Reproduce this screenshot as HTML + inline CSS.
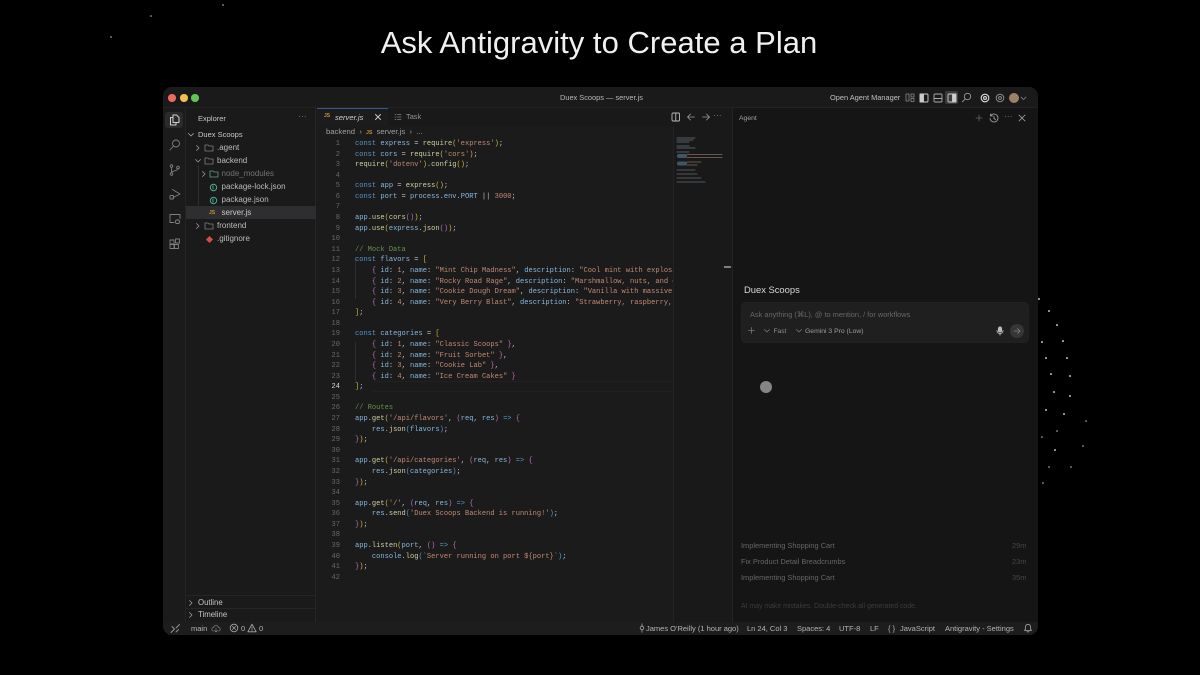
<!DOCTYPE html>
<html><head><meta charset="utf-8"><style>
*{box-sizing:border-box}
html,body{margin:0;padding:0;width:1200px;height:675px;overflow:hidden;background:#000}
body{position:relative;font-family:"Liberation Sans",sans-serif}
.a{position:absolute;white-space:pre}
h1{position:absolute;left:-1px;top:24px;width:1200px;margin:0;text-align:center;font-weight:400;font-size:31px;line-height:38px;letter-spacing:.02px;color:#f0f0f0}
#w{position:absolute;left:163px;top:87px;width:875px;height:548px;background:#1b1b1c;border-radius:9px;overflow:hidden;filter:blur(.35px)}
#code{position:absolute;left:192px;top:52px;width:318px;height:450px;overflow:hidden;font:7.05px/10.58px "Liberation Mono",monospace;color:#bfc2c6}
#code div{height:10.58px;white-space:pre}
#nums{position:absolute;left:155px;top:52px;width:22px;text-align:right;font:7.05px/10.58px "Liberation Mono",monospace;color:#65686b}
#nums div{height:10.58px}
.k{color:#5595c4}.v{color:#86b8dc}.f{color:#cfcfa2}.s{color:#c08a73}.c{color:#64904f}.y{color:#cfb238}.p{color:#b96fb4}.b{color:#5595c4}
.t{font-size:8px;color:#bcbcbc}
.h{font-size:7.5px;color:#c4c4c4}
.st{font-size:7.5px;color:#b5b5b5;top:536px;line-height:12px}
svg{position:absolute;overflow:visible;fill:none;stroke-linecap:round;stroke-linejoin:round}
.s1{position:absolute;width:1.5px;height:1.5px;border-radius:50%;background:#a8a8a8}
.s2{position:absolute;width:1.5px;height:1.5px;border-radius:50%;background:#666}
</style></head><body>
<h1>Ask Antigravity to Create a Plan</h1>

<i class="s2" style="left:150px;top:15px;background:#567"></i><i class="s2" style="left:222px;top:4px"></i><i class="s2" style="left:110px;top:36px"></i>
<i class="s1" style="left:1038px;top:298px"></i><i class="s1" style="left:1048px;top:310px"></i><i class="s1" style="left:1056px;top:324px"></i><i class="s1" style="left:1041px;top:341px"></i><i class="s1" style="left:1062px;top:340px"></i><i class="s1" style="left:1045px;top:357px"></i><i class="s1" style="left:1066px;top:357px"></i><i class="s1" style="left:1050px;top:373px"></i><i class="s1" style="left:1069px;top:375px"></i><i class="s1" style="left:1053px;top:391px"></i><i class="s1" style="left:1069px;top:395px"></i><i class="s1" style="left:1045px;top:409px"></i><i class="s1" style="left:1063px;top:413px"></i><i class="s2" style="left:1085px;top:420px"></i><i class="s2" style="left:1056px;top:430px"></i><i class="s2" style="left:1041px;top:436px"></i><i class="s2" style="left:1082px;top:445px"></i><i class="s1" style="left:1054px;top:449px"></i><i class="s2" style="left:1048px;top:466px"></i><i class="s2" style="left:1070px;top:466px"></i><i class="s2" style="left:1042px;top:482px"></i>

<div id="w">
<!-- panels -->
<div class="a" style="left:0;top:0;width:875px;height:21px;background:#1a1a1b;border-bottom:1px solid #222223"></div>
<div class="a" style="left:0;top:21px;width:23px;height:514px;background:#1b1b1c;border-right:1px solid #242425"></div>
<div class="a" style="left:23px;top:21px;width:130px;height:514px;background:#1a1a1b;border-right:1px solid #262627"></div>
<div class="a" style="left:154px;top:21px;width:415px;height:18px;background:#19191a"></div>
<div class="a" style="left:510px;top:39px;width:59px;height:496px;background:#191919;border-left:1px solid #232324"></div>
<div class="a" style="left:569px;top:21px;width:306px;height:514px;background:#151515;border-left:1px solid #242425"></div>
<div class="a" style="left:0;top:535px;width:875px;height:13px;background:#1d1d1e"></div>

<!-- traffic lights -->
<i class="a" style="left:5px;top:7px;width:7.5px;height:7.5px;border-radius:50%;background:#ee6a5f"></i>
<i class="a" style="left:17px;top:7px;width:7.5px;height:7.5px;border-radius:50%;background:#f5bd4f"></i>
<i class="a" style="left:28px;top:7px;width:7.5px;height:7.5px;border-radius:50%;background:#61c454"></i>
<div class="a" style="left:1px;top:5px;width:875px;text-align:center;font-size:7.4px;line-height:11px;color:#b8b8b8">Duex Scoops — server.js</div>
<div class="a" style="left:667px;top:5px;font-size:7.4px;line-height:11px;color:#c0c0c0">Open Agent Manager</div>

<!-- title icons -->
<svg style="left:742px;top:6px" width="10" height="10" stroke="#8a8a8a" stroke-width=".8"><rect x="1" y="1" width="3" height="7"/><rect x="6" y="1" width="3" height="3"/><rect x="6" y="5.5" width="3" height="3"/></svg>
<svg style="left:756px;top:6px" width="10" height="10" stroke="#ccc" stroke-width=".9"><rect x="1" y="1" width="8" height="8" rx="1"/><rect x="1" y="1" width="3.5" height="8" fill="#ccc"/></svg>
<svg style="left:770px;top:6px" width="10" height="10" stroke="#aaa" stroke-width=".9"><rect x="1" y="1" width="8" height="8" rx="1"/><path d="M1 5.5h8"/></svg>
<div class="a" style="left:782px;top:4px;width:13px;height:13px;background:#3b3b3c;border-radius:2px"></div>
<svg style="left:784px;top:6px" width="10" height="10" stroke="#ccc" stroke-width=".9"><rect x="1" y="1" width="8" height="8" rx="1"/><rect x="5.5" y="1" width="3.5" height="8" fill="#ccc"/></svg>
<svg style="left:798px;top:5px" width="11" height="11" stroke="#999" stroke-width=".9"><circle cx="6.5" cy="4.5" r="3.2"/><path d="M4 7L1.5 9.8"/></svg>
<svg style="left:817px;top:6px" width="10" height="10" stroke="#ddd" stroke-width="1.1"><circle cx="5" cy="5" r="3.8"/><circle cx="5" cy="5" r="1.4"/></svg>
<svg style="left:832px;top:6px" width="10" height="10" stroke="#999" stroke-width=".9"><circle cx="5" cy="5" r="3.8"/><circle cx="5" cy="5" r="1.4"/></svg>
<i class="a" style="left:846px;top:6px;width:10px;height:10px;border-radius:50%;background:#9a8268"></i>
<svg style="left:857px;top:9px" width="7" height="5" stroke="#888" stroke-width=".8"><path d="M1 1l2.5 2.5L6 1"/></svg>

<!-- activity bar -->
<div class="a" style="left:2px;top:25px;width:18px;height:16px;background:#2b2b2c;border-radius:3px"></div>
<svg style="left:6px;top:27px" width="11" height="12" stroke="#d0d0d0" stroke-width="1"><path d="M4 1h3.5L10 3.5V8.500H4z"/><path d="M4 3.500H1.500V11H7V8.500"/></svg>
<svg style="left:6px;top:52px" width="12" height="12" stroke="#808080" stroke-width=".9"><circle cx="7" cy="4.500" r="3.500"/><path d="M4.500 7L1 11"/></svg>
<svg style="left:6px;top:77px" width="12" height="12" stroke="#808080" stroke-width=".9"><circle cx="2.500" cy="2" r="1.300"/><circle cx="2.500" cy="10" r="1.300"/><circle cx="9" cy="3.500" r="1.300"/><path d="M2.500 3.300v5.400M9 4.800c0 2.500-6.500 1.500-6.500 4"/></svg>
<svg style="left:6px;top:101px" width="12" height="12" stroke="#808080" stroke-width=".9"><path d="M3.500 1.500L11 6 4 9.500"/><rect x="1" y="7.500" width="3.500" height="3.500" rx=".8"/></svg>
<svg style="left:6px;top:126px" width="12" height="12" stroke="#808080" stroke-width=".9"><path d="M5 9.500H1V1.500h10v4"/><rect x="6.500" y="7" width="4" height="3.500" rx="1.500"/></svg>
<svg style="left:6px;top:151px" width="12" height="12" stroke="#808080" stroke-width=".9"><rect x="1" y="2" width="4" height="4"/><rect x="1" y="6.500" width="4" height="4"/><rect x="5.500" y="6.500" width="4" height="4"/><rect x="6.500" y="1" width="4" height="4"/></svg>
<svg style="left:7px;top:536px" width="11" height="11" stroke="#999" stroke-width=".9"><path d="M1 9.500L4.500 6 2 3.500M6 9l2.500-2.500M6 5L9.500 1.500"/></svg>

<!-- explorer -->
<div class="a h" style="left:35px;top:26px;line-height:11px">Explorer</div>
<div class="a" style="left:135px;top:24px;font-size:8px;line-height:11px;color:#888;letter-spacing:.3px">···</div>
<svg style="left:24px;top:44px" width="8" height="8" stroke="#aaa" stroke-width=".8"><path d="M1.500 2.500L4 5l2.500-2.500"/></svg>
<div class="a h" style="left:35px;top:43px;line-height:10px;color:#c8c8c8">Duex Scoops</div>

<svg style="left:31px;top:57px" width="8" height="8" stroke="#999" stroke-width=".8"><path d="M2.500 1.500L5 4 2.500 6.500"/></svg>
<svg style="left:41px;top:57px" width="10" height="8" stroke="#808080" stroke-width=".8"><path d="M1 1h3l1 1h4v5H1z"/></svg>
<div class="a t" style="left:54px;top:56px;line-height:10px">.agent</div>

<svg style="left:31px;top:70px" width="8" height="8" stroke="#999" stroke-width=".8"><path d="M1.500 2.500L4 5l2.500-2.500"/></svg>
<svg style="left:41px;top:70px" width="10" height="8" stroke="#808080" stroke-width=".8"><path d="M1 1h3l1 1h4v5H1z"/></svg>
<div class="a t" style="left:54px;top:69px;line-height:10px">backend</div>

<i class="a" style="left:35px;top:78px;width:1px;height:51px;background:#2e2e2f"></i>
<svg style="left:37px;top:83px" width="8" height="8" stroke="#999" stroke-width=".8"><path d="M2.500 1.500L5 4 2.500 6.500"/></svg>
<svg style="left:46px;top:83px" width="10" height="8" stroke="#5f9e88" stroke-width=".8"><path d="M1 1h3l1 1h4v5H1z"/></svg>
<div class="a t" style="left:58.500px;top:82px;line-height:10px;color:#737373">node_modules</div>

<svg style="left:46px;top:96px" width="9" height="9" stroke="#4fa88f" stroke-width="1"><circle cx="4.500" cy="4.500" r="3.200"/><path d="M4 3v3"/></svg>
<div class="a t" style="left:58.500px;top:95px;line-height:10px">package-lock.json</div>
<svg style="left:46px;top:109px" width="9" height="9" stroke="#4fa88f" stroke-width="1"><circle cx="4.500" cy="4.500" r="3.200"/><path d="M4 3v3"/></svg>
<div class="a t" style="left:58.500px;top:108px;line-height:10px">package.json</div>

<div class="a" style="left:23px;top:119px;width:130px;height:13px;background:#2e2e30"></div>
<div class="a" style="left:46px;top:122px;font-size:5px;line-height:9px;font-weight:700;color:#c9923f">JS</div>
<div class="a t" style="left:58.500px;top:121px;line-height:10px;color:#c8c8c8">server.js</div>

<svg style="left:31px;top:135px" width="8" height="8" stroke="#999" stroke-width=".8"><path d="M2.500 1.500L5 4 2.500 6.500"/></svg>
<svg style="left:41px;top:135px" width="10" height="8" stroke="#808080" stroke-width=".8"><path d="M1 1h3l1 1h4v5H1z"/></svg>
<div class="a t" style="left:54px;top:134px;line-height:10px">frontend</div>
<i class="a" style="left:43.500px;top:150px;width:5px;height:5px;background:#d84c46;transform:rotate(45deg)"></i>
<div class="a t" style="left:54px;top:147px;line-height:10px">.gitignore</div>

<div class="a" style="left:23px;top:508px;width:130px;height:1px;background:#252526"></div>
<div class="a" style="left:23px;top:521px;width:130px;height:1px;background:#252526"></div>
<svg style="left:24px;top:512px" width="8" height="8" stroke="#999" stroke-width=".8"><path d="M2.500 1.500L5 4 2.500 6.500"/></svg>
<div class="a h" style="left:35px;top:511px;line-height:10px;font-size:7.8px">Outline</div>
<svg style="left:24px;top:524px" width="8" height="8" stroke="#999" stroke-width=".8"><path d="M2.500 1.500L5 4 2.500 6.500"/></svg>
<div class="a h" style="left:35px;top:523px;line-height:10px;font-size:7.8px">Timeline</div>

<!-- tabs -->
<div class="a" style="left:154px;top:21px;width:71px;height:18px;background:#1c1c1d;border-top:1px solid #2f5a88"></div>
<div class="a" style="left:161px;top:25px;font-size:5px;line-height:9px;font-weight:700;color:#c9923f">JS</div>
<div class="a" style="left:172px;top:24.500px;font-size:7.600px;line-height:11px;font-style:italic;color:#d0d0d0">server.js</div>
<svg style="left:210px;top:25px" width="10" height="10" stroke="#ccc" stroke-width=".9"><path d="M2.500 2.500l5 5M7.500 2.500l-5 5"/></svg>
<svg style="left:231px;top:26px" width="8" height="8" stroke="#808080" stroke-width=".8"><path d="M1 1.500h1M3.500 1.500H7M1 4h1M3.500 4H7M1 6.500h1M3.500 6.500H7"/></svg>
<div class="a" style="left:243px;top:25px;font-size:7.400px;line-height:10px;color:#909090">Task</div>

<svg style="left:508px;top:25px" width="10" height="10" stroke="#bbb" stroke-width=".9"><rect x="1" y="1" width="7.500" height="8" rx="1"/><path d="M4.750 1v8"/></svg>
<svg style="left:523px;top:25px" width="10" height="10" stroke="#999" stroke-width=".8"><path d="M8.500 5h-7M4.500 2L1.500 5l3 3"/></svg>
<svg style="left:538px;top:25px" width="10" height="10" stroke="#999" stroke-width=".8"><path d="M1.500 5h7M5.500 2l3 3-3 3"/></svg>
<div class="a" style="left:550px;top:23px;font-size:8px;line-height:11px;color:#888;letter-spacing:.3px">···</div>

<!-- breadcrumbs -->
<div class="a" style="left:163px;top:40px;font-size:7.700px;line-height:10px;color:#a0a0a0">backend  ›  <span style="font-size:5px;font-weight:700;color:#c9923f">JS</span>  server.js  ›  ...</div>

<!-- line numbers -->
<div id="nums"><div>1</div><div>2</div><div>3</div><div>4</div><div>5</div><div>6</div><div>7</div><div>8</div><div>9</div><div>10</div><div>11</div><div>12</div><div>13</div><div>14</div><div>15</div><div>16</div><div>17</div><div>18</div><div>19</div><div>20</div><div>21</div><div>22</div><div>23</div><div style="color:#d8d8d8">24</div><div>25</div><div>26</div><div>27</div><div>28</div><div>29</div><div>30</div><div>31</div><div>32</div><div>33</div><div>34</div><div>35</div><div>36</div><div>37</div><div>38</div><div>39</div><div>40</div><div>41</div><div>42</div></div>

<i class="a" style="left:192px;top:171px;width:1px;height:41px;background:#2e2e2f"></i>
<i class="a" style="left:192px;top:255px;width:1px;height:41px;background:#2e2e2f"></i>
<i class="a" style="left:210px;top:294px;width:300px;height:1px;background:#212122"></i>
<i class="a" style="left:210px;top:304px;width:300px;height:1px;background:#212122"></i>

<div id="code">
<div><span class="k">const</span> <span class="v">express</span> = <span class="f">require</span><span class="y">(</span><span class="s">'express'</span><span class="y">)</span>;</div>
<div><span class="k">const</span> <span class="v">cors</span> = <span class="f">require</span><span class="y">(</span><span class="s">'cors'</span><span class="y">)</span>;</div>
<div><span class="f">require</span><span class="y">(</span><span class="s">'dotenv'</span><span class="y">)</span>.<span class="f">config</span><span class="y">()</span>;</div>
<div> </div>
<div><span class="k">const</span> <span class="v">app</span> = <span class="f">express</span><span class="y">()</span>;</div>
<div><span class="k">const</span> <span class="v">port</span> = <span class="v">process</span>.<span class="v">env</span>.<span class="v">PORT</span> || <span class="s">3000</span>;</div>
<div> </div>
<div><span class="v">app</span>.<span class="f">use</span><span class="y">(</span><span class="f">cors</span><span class="p">()</span><span class="y">)</span>;</div>
<div><span class="v">app</span>.<span class="f">use</span><span class="y">(</span><span class="v">express</span>.<span class="f">json</span><span class="p">()</span><span class="y">)</span>;</div>
<div> </div>
<div><span class="c">// Mock Data</span></div>
<div><span class="k">const</span> <span class="v">flavors</span> = <span class="y">[</span></div>
<div>    <span class="p">{</span> <span class="v">id</span>: <span class="s">1</span>, <span class="v">name</span>: <span class="s">"Mint Chip Madness"</span>, <span class="v">description</span>: <span class="s">"Cool mint with explosive chocolate"</span></div>
<div>    <span class="p">{</span> <span class="v">id</span>: <span class="s">2</span>, <span class="v">name</span>: <span class="s">"Rocky Road Rage"</span>, <span class="v">description</span>: <span class="s">"Marshmallow, nuts, and chocolate"</span></div>
<div>    <span class="p">{</span> <span class="v">id</span>: <span class="s">3</span>, <span class="v">name</span>: <span class="s">"Cookie Dough Dream"</span>, <span class="v">description</span>: <span class="s">"Vanilla with massive chunks"</span></div>
<div>    <span class="p">{</span> <span class="v">id</span>: <span class="s">4</span>, <span class="v">name</span>: <span class="s">"Very Berry Blast"</span>, <span class="v">description</span>: <span class="s">"Strawberry, raspberry, blueberry"</span></div>
<div><span class="y">]</span>;</div>
<div> </div>
<div><span class="k">const</span> <span class="v">categories</span> = <span class="y">[</span></div>
<div>    <span class="p">{</span> <span class="v">id</span>: <span class="s">1</span>, <span class="v">name</span>: <span class="s">"Classic Scoops"</span> <span class="p">}</span>,</div>
<div>    <span class="p">{</span> <span class="v">id</span>: <span class="s">2</span>, <span class="v">name</span>: <span class="s">"Fruit Sorbet"</span> <span class="p">}</span>,</div>
<div>    <span class="p">{</span> <span class="v">id</span>: <span class="s">3</span>, <span class="v">name</span>: <span class="s">"Cookie Lab"</span> <span class="p">}</span>,</div>
<div>    <span class="p">{</span> <span class="v">id</span>: <span class="s">4</span>, <span class="v">name</span>: <span class="s">"Ice Cream Cakes"</span> <span class="p">}</span></div>
<div><span class="y">]</span>;</div>
<div> </div>
<div><span class="c">// Routes</span></div>
<div><span class="v">app</span>.<span class="f">get</span><span class="y">(</span><span class="s">'/api/flavors'</span>, <span class="p">(</span><span class="v">req</span>, <span class="v">res</span><span class="p">)</span> <span class="k">=&gt;</span> <span class="p">{</span></div>
<div>    <span class="v">res</span>.<span class="f">json</span><span class="b">(</span><span class="v">flavors</span><span class="b">)</span>;</div>
<div><span class="p">}</span><span class="y">)</span>;</div>
<div> </div>
<div><span class="v">app</span>.<span class="f">get</span><span class="y">(</span><span class="s">'/api/categories'</span>, <span class="p">(</span><span class="v">req</span>, <span class="v">res</span><span class="p">)</span> <span class="k">=&gt;</span> <span class="p">{</span></div>
<div>    <span class="v">res</span>.<span class="f">json</span><span class="b">(</span><span class="v">categories</span><span class="b">)</span>;</div>
<div><span class="p">}</span><span class="y">)</span>;</div>
<div> </div>
<div><span class="v">app</span>.<span class="f">get</span><span class="y">(</span><span class="s">'/'</span>, <span class="p">(</span><span class="v">req</span>, <span class="v">res</span><span class="p">)</span> <span class="k">=&gt;</span> <span class="p">{</span></div>
<div>    <span class="v">res</span>.<span class="f">send</span><span class="b">(</span><span class="s">'Duex Scoops Backend is running!'</span><span class="b">)</span>;</div>
<div><span class="p">}</span><span class="y">)</span>;</div>
<div> </div>
<div><span class="v">app</span>.<span class="f">listen</span><span class="y">(</span><span class="v">port</span>, <span class="p">()</span> <span class="k">=&gt;</span> <span class="p">{</span></div>
<div>    <span class="v">console</span>.<span class="f">log</span><span class="b">(</span><span class="s">`Server running on port ${port}`</span><span class="b">)</span>;</div>
<div><span class="p">}</span><span class="y">)</span>;</div>
<div> </div>
</div>

<!-- minimap -->
<svg style="left:513px;top:50px" width="50" height="56" stroke-width="1">
<path stroke="#7a8a98" d="M1 1h18M1 3h16M1 5h12M1 9h12M1 11h18M1 15h12" opacity=".6"/>
<path stroke="#5c7f98" d="M3 19h6M3 26.500h6" stroke-width="4" opacity=".6"/>
<path stroke="#9c7d6c" d="M11 17.500h35M11 20.500h35M11 25h14M11 28h10" opacity=".6" stroke-width="1"/>
<path stroke="#8a94a0" d="M1 33h18M1 37h20M1 41h24M1 45h28" opacity=".5"/>
</svg>
<i class="a" style="left:561px;top:179px;width:7px;height:1.500px;background:#808080"></i>

<!-- agent -->
<div class="a" style="left:576px;top:26.500px;font-size:6.800px;line-height:10px;color:#a0a0a0">Agent</div>
<svg style="left:811px;top:26px" width="10" height="10" stroke="#666" stroke-width=".8"><path d="M5 2v6M2 5h6"/></svg>
<svg style="left:826px;top:26px" width="10" height="10" stroke="#aaa" stroke-width=".8"><path d="M1.500 3A4 4 0 1 1 1 5.500M1.500 1v2h2M5 3v2.500l1.500 1"/></svg>
<div class="a" style="left:841px;top:24px;font-size:8px;line-height:11px;color:#888;letter-spacing:.2px">···</div>
<svg style="left:854px;top:26px" width="10" height="10" stroke="#aaa" stroke-width=".8"><path d="M2 2l6 6M8 2l-6 6"/></svg>

<div class="a" style="left:581px;top:197px;font-size:9.400px;line-height:12px;color:#d8d8d8">Duex Scoops</div>
<div class="a" style="left:578px;top:215px;width:288px;height:41px;background:#1f1f20;border-radius:5px;border:1px solid #222223"></div>
<div class="a" style="left:587px;top:222.500px;font-size:7.400px;line-height:10px;color:#686868">Ask anything (⌘L), @ to mention, / for workflows</div>
<svg style="left:584px;top:239px" width="9" height="9" stroke="#777" stroke-width=".8"><path d="M4.500 1.500v6M1.500 4.500h6"/></svg>
<svg style="left:600px;top:240px" width="8" height="8" stroke="#808080" stroke-width=".7"><path d="M1.500 2.500L4 5l2.500-2.500"/></svg>
<div class="a" style="left:610.500px;top:239.500px;font-size:6.600px;line-height:10px;color:#909090">Fast</div>
<svg style="left:632px;top:240px" width="8" height="8" stroke="#808080" stroke-width=".7"><path d="M1.500 2.500L4 5l2.500-2.500"/></svg>
<div class="a" style="left:642px;top:239.500px;font-size:6.800px;line-height:10px;color:#9c9c9c">Gemini 3 Pro (Low)</div>
<svg style="left:832px;top:239px" width="10" height="10" stroke="#bbb" stroke-width=".9"><rect x="3.400" y="1" width="3.200" height="5" rx="1.600" fill="#bbb"/><path d="M2 4.500c0 4 6 4 6 0M5 7.500V9"/></svg>
<i class="a" style="left:847px;top:237px;width:14px;height:14px;border-radius:50%;background:#363637"></i>
<svg style="left:849px;top:239px" width="10" height="10" stroke="#808080" stroke-width=".8"><path d="M2 5h6M5.500 2.500L8 5 5.500 7.500"/></svg>

<i class="a" style="left:597px;top:294px;width:12px;height:12px;border-radius:50%;background:#858585"></i>

<div class="a" style="left:578px;top:454px;font-size:7.400px;line-height:10px;color:#666">Implementing Shopping Cart</div>
<div class="a" style="left:578px;top:470px;font-size:7.400px;line-height:10px;color:#666">Fix Product Detail Breadcrumbs</div>
<div class="a" style="left:578px;top:486px;font-size:7.400px;line-height:10px;color:#666">Implementing Shopping Cart</div>
<div class="a" style="left:849px;top:454px;font-size:7.400px;line-height:10px;color:#464646">29m</div>
<div class="a" style="left:849px;top:470px;font-size:7.400px;line-height:10px;color:#464646">23m</div>
<div class="a" style="left:849px;top:486px;font-size:7.400px;line-height:10px;color:#464646">35m</div>
<div class="a" style="left:578px;top:515px;font-size:6.900px;line-height:10px;color:#3c3c3c">AI may make mistakes. Double-check all generated code.</div>

<!-- status bar -->
<div class="a st" style="left:28px">main</div>
<svg style="left:48px;top:537px" width="10" height="9" stroke="#808080" stroke-width=".7"><path d="M2.500 7C0 7 .5 3.500 2.500 3.500 3 1 7 1 7.500 3.500 9.500 3.500 10 7 7.500 7M5 4v4M3.500 6.500L5 8l1.500-1.500"/></svg>
<svg style="left:66px;top:536px" width="10" height="10" stroke="#aaa" stroke-width=".8"><circle cx="5" cy="5" r="3.800"/><path d="M3.500 3.500l3 3M6.500 3.500l-3 3"/></svg>
<div class="a st" style="left:78px">0</div>
<svg style="left:84px;top:536px" width="10" height="10" stroke="#aaa" stroke-width=".8"><path d="M5 1.200L9.200 8.800H.8zM5 4v2.500M5 7.500v.3"/></svg>
<div class="a st" style="left:96px">0</div>
<svg style="left:475px;top:536px" width="8" height="10" stroke="#aaa" stroke-width=".8"><circle cx="4" cy="5" r="1.800"/><path d="M4 .8v2.400M4 6.800v2.400"/></svg>
<div class="a st" style="left:483px">James O'Reilly (1 hour ago)</div>
<div class="a st" style="left:584px">Ln 24, Col 3</div>
<div class="a st" style="left:634px">Spaces: 4</div>
<div class="a st" style="left:676px">UTF-8</div>
<div class="a st" style="left:707px">LF</div>
<div class="a st" style="left:725px">{ }</div>
<div class="a st" style="left:737px">JavaScript</div>
<div class="a st" style="left:782px">Antigravity - Settings</div>
<svg style="left:860px;top:536px" width="10" height="10" stroke="#aaa" stroke-width=".8"><path d="M1.500 7.500h7L7.500 6V3.800a2.500 2.500 0 0 0-5 0V6zM4 8.800h2"/></svg>
</div>
</body></html>
